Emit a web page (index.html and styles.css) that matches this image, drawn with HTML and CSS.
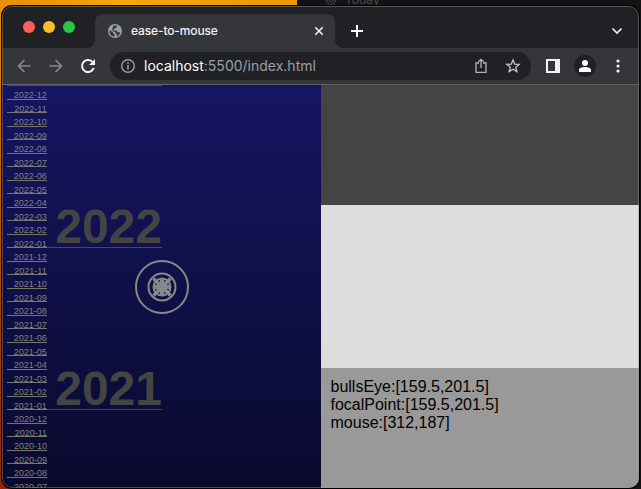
FILE: index.html
```html
<!DOCTYPE html>
<html lang="en">
<head>
<meta charset="utf-8">
<title>ease-to-mouse</title>
<link rel="stylesheet" href="styles.css">
</head>
<body>
<div class="behind"><svg width="12" height="12" viewBox="0 0 12 12" fill="none" stroke="#484848"><circle cx="6" cy="6" r="4.5" stroke-width="1.5" stroke-dasharray="2 1"/><circle cx="6" cy="6" r="2"/></svg><span>Today</span></div>
<div class="window">
  <header class="tabs">
    <div class="lights"><i class="red"></i><i class="yellow"></i><i class="green"></i></div>
    <div class="tab">
      <svg class="globe" width="14" height="14" viewBox="0 0 14 14"><circle cx="7" cy="7" r="7" fill="#9aa0a6"/><path d="M1.5 6.2L5 8.2V9.5L6.5 10.3V12.6C3.2 12.4 1.2 9.6 1.5 6.2ZM5.2 1.7L8.8 1.6V3.2L7.2 4.4H5.6V6.4H8.4L9.8 8.2H11.3L12.3 8.4C11.8 10.3 10.6 11.5 9 12.2L8.8 10.3L7.3 9.2V7.7H5.6L4.2 6V4L5.2 3.2Z" fill="#35363a"/></svg>
      <span class="title">ease-to-mouse</span>
      <svg width="10" height="10" viewBox="0 0 10 10" stroke="#f1f3f4" stroke-width="1.6"><path d="M1.3 1.3L8.7 8.7M8.7 1.3L1.3 8.7"/></svg>
    </div>
    <svg class="plus" width="12" height="12" viewBox="0 0 12 12" stroke="#fff" stroke-width="2"><path d="M6 0V12M0 6H12"/></svg>
    <svg class="chevron" width="12" height="8" viewBox="0 0 12 8" fill="none" stroke="#f1f3f4" stroke-width="1.7"><path d="M1.5 1.5L6 6L10.500 1.500"/></svg>
  </header>
  <div class="toolbar">
    <svg class="back" width="16" height="16" viewBox="0 0 16 16" fill="none" stroke="#86888b" stroke-width="1.7"><path d="M14.500 8H2.500M8.500 2L2.500 8L8.500 14"/></svg>
    <svg class="forward" width="16" height="16" viewBox="0 0 16 16" fill="none" stroke="#86888b" stroke-width="1.7"><path d="M1.500 8H13.500M7.500 2L13.500 8L7.500 14"/></svg>
    <svg class="reload" width="16" height="16" viewBox="0 0 16 16"><path d="M13.700 10A6 6 0 1 1 12.300 3.800" fill="none" stroke="#f1f3f4" stroke-width="2"/><path d="M15 1V7H9Z" fill="#f1f3f4"/></svg>
    <div class="address">
      <svg width="14" height="14" viewBox="0 0 14 14" fill="none" stroke="#9aa0a6"><circle cx="7" cy="7" r="6.300" stroke-width="1.400"/><path d="M7 6V10.500M7 3.300V4.900" stroke-width="1.600"/></svg>
      <span class="url"><b>localhost</b>:5500/index.html</span>
      <svg class="share" width="12" height="16" viewBox="0 0 12 16" fill="none" stroke="#b3b5b8" stroke-width="1.300"><path d="M4 5H1V14.300H11V5H8M6 10V1.500M3.300 4L6 1.300L8.700 4"/></svg>
      <svg class="star" width="16" height="16" viewBox="0 0 16 16" fill="none" stroke="#c2c4c7" stroke-width="1.300"><path d="M8 2L9.700 6.100L14.200 6.400L10.700 9.200L11.900 13.600L8 11.200L4.100 13.600L5.300 9.200L1.800 6.400L6.300 6.100Z"/></svg>
    </div>
    <svg class="panel" width="14" height="14" viewBox="0 0 14 14"><path fill="#f1f3f4" fill-rule="evenodd" d="M0 0H14V14H0ZM2 2V12H9V2Z"/></svg>
    <div class="avatar"><svg width="12" height="12" viewBox="0 0 12 12" fill="#fff"><circle cx="6" cy="3" r="3"/><path d="M0 12V10C0 8 3 7 6 7S12 8 12 10V12Z"/></svg></div>
    <svg class="dots" width="4" height="14" viewBox="0 0 4 14" fill="#f1f3f4"><circle cx="2" cy="2" r="1.600"/><circle cx="2" cy="7" r="1.600"/><circle cx="2" cy="12" r="1.600"/></svg>
  </div>
  <main class="page">
    <section class="timeline">
      <div class="year edge"></div>
      <div class="year"><ol><li>2022-12</li><li>2022-11</li><li>2022-10</li><li>2022-09</li><li>2022-08</li><li>2022-07</li><li>2022-06</li><li>2022-05</li><li>2022-04</li><li>2022-03</li><li>2022-02</li><li>2022-01</li></ol><h2>2022</h2></div>
      <div class="year"><ol><li>2021-12</li><li>2021-11</li><li>2021-10</li><li>2021-09</li><li>2021-08</li><li>2021-07</li><li>2021-06</li><li>2021-05</li><li>2021-04</li><li>2021-03</li><li>2021-02</li><li>2021-01</li></ol><h2>2021</h2></div>
      <div class="year"><ol><li>2020-12</li><li>2020-11</li><li>2020-10</li><li>2020-09</li><li>2020-08</li><li>2020-07</li></ol></div>
      <svg class="target" width="54" height="54" viewBox="0 0 54 54" fill="none" stroke="#888" stroke-width="2"><circle cx="27" cy="27" r="26"/><circle cx="27" cy="27" r="13.500"/><circle cx="27" cy="27" r="8.500"/><path d="M27 18V36M18 27H36" stroke-width="4.500"/><path d="M18.500 18.500L35.500 35.500M35.500 18.500L18.500 35.500" stroke-width="3.500"/></svg>
    </section>
    <section class="side">
      <div class="dark"></div>
      <div class="light"></div>
      <div class="readout"><p>bullsEye:[159.5,201.5]</p><p>focalPoint:[159.5,201.5]</p><p>mouse:[312,187]</p></div>
    </section>
  </main>
</div>
</body>
</html>
```
FILE: styles.css
```css
* { box-sizing: border-box; margin: 0; padding: 0; }
body {
  width: 641px; height: 489px; overflow: hidden; padding: 6px 2px 1px;
  font-family: "Liberation Sans", Arial, sans-serif;
  background:
    linear-gradient(90deg, #e98c08, #f6a50b 40%, #eb990a) 0 0 / 297px 16px no-repeat,
    linear-gradient(#e98c08, #c96500 35%, #a94300 65%, #962500) 0 0 / 12px 489px no-repeat,
    #131313;
}
svg { display: block; flex: none; }
.behind { position: absolute; left: 325px; top: -6px; display: flex; gap: 8px; font: 12px/12px Inter, sans-serif; color: #4c4c4c; }
.window {
  height: 482px; border-radius: 10px; overflow: hidden; background: #202124;
  position: relative; display: flex; flex-direction: column;
  box-shadow: 0 0 0 1px #000;
}
.window::after { content: ""; position: absolute; inset: 0; border: 1px solid rgba(150,150,150,.45); border-radius: 10px; }
.tabs { height: 42px; flex: none; display: flex; padding-top: 8px; }
.lights { display: flex; gap: 8px; padding: 7px 0 0 21px; width: 93px; }
.lights i { width: 12px; height: 12px; border-radius: 50%; }
.red { background: #ff5f57; }
.yellow { background: #febc2e; }
.green { background: #28c840; }
.tab {
  position: relative; width: 240px; height: 34px; padding: 0 11px 0 13px; display: flex; align-items: center;
  background: #35363a; border-radius: 8px 8px 0 0;
}
.tab::before, .tab::after { content: ""; position: absolute; bottom: 0; width: 8px; height: 8px; }
.tab::before { left: -8px; background: radial-gradient(circle at 0 0, transparent 7.5px, #35363a 8px); }
.tab::after { right: -8px; background: radial-gradient(circle at 100% 0, transparent 7.5px, #35363a 8px); }
.title { margin: 0 auto 0 9px; font: 500 12px/16px Inter, sans-serif; letter-spacing: -.13px; color: #f1f3f4; }
.plus { margin: 11px 0 0 16px; }
.chevron { margin: 13px 16px 0 auto; }
.toolbar { height: 36px; flex: none; display: flex; align-items: center; background: #35363a; padding: 0 19px 0 14px; }
.forward, .reload { margin-left: 16px; }
.address { width: 421px; height: 28px; margin-left: 14px; border-radius: 14px; padding: 0 10px 0 11px; display: flex; align-items: center; background: #202124; }
.url { margin: 0 auto 0 9px; font: 14px/18px Inter, sans-serif; color: #9aa0a6; white-space: nowrap; }
.url b { font-weight: 400; color: #fff; }
.star { margin-left: 18px; }
.panel { margin-left: 15px; }
.avatar { width: 22px; height: 22px; margin-left: 14px; border-radius: 50%; background: #202124; display: grid; place-items: center; }
.dots { margin-left: auto; }
.page { flex: 1; min-height: 0; display: flex; border-top: 1px solid #626367; }
.timeline { position: relative; width: 319px; overflow: hidden; padding-left: 5px; background: linear-gradient(#151562, #0a0a2e); }
.year { display: flex; height: 162px; width: 155px; border-bottom: 1px solid #48484a; }
.year.edge { height: 1px; }
ol { list-style: none; width: 40px; }
li { height: 13.5px; border-bottom: 1px solid #77776a; font-size: 9px; line-height: 18.5px; text-align: right; color: #82827c; white-space: nowrap; }
h2 { align-self: flex-end; margin-left: 8.5px; font-size: 48px; line-height: 40px; color: #444; }
.target { position: absolute; left: 133px; top: 175px; }
.side { flex: 1; display: flex; flex-direction: column; }
.dark { height: 120px; background: #444; }
.light { height: 163px; background: #ddd; }
.readout { flex: 1; padding: 10px 9.5px; background: #999; font-size: 16px; line-height: 18px; color: #000; }
```
